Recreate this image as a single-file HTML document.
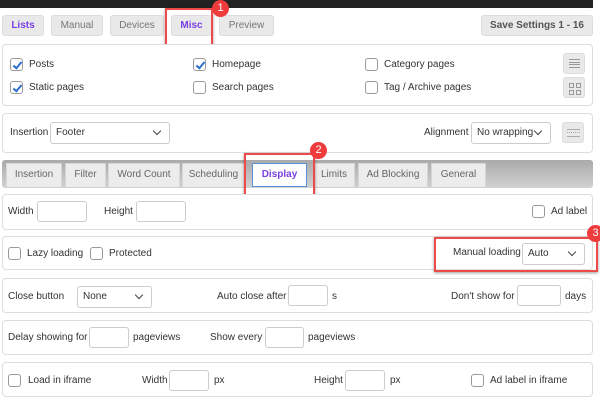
<!DOCTYPE html><html><head><style>
body{margin:0;width:600px;height:404px;background:#fff;font-family:"Liberation Sans",sans-serif;font-size:10px;color:#333;position:relative;overflow:hidden}
div,span{position:absolute;box-sizing:border-box}
.bar{left:0;top:0;width:593px;height:8px;background:#222}
.btn{height:21px;top:15px;background:#e9e9e9;border:1px solid #ddd;border-radius:3px;color:#777;text-align:center;line-height:19px;font-size:10px}
.pan{left:2px;width:591px;border:1px solid #ddd;border-radius:4px;background:#fff}
.cb{width:13px;height:13px;border:1px solid #999;border-radius:3px;background:#fff}
.ck::after{content:"";position:absolute;left:3.5px;top:1px;width:3px;height:7px;border:solid #2a6fc9;border-width:0 2px 2px 0;transform:rotate(40deg)}
.t{white-space:nowrap;line-height:13px}
.in{height:21px;border:1px solid #ccc;border-radius:3px;background:#fff}
.sel{height:22px;border:1px solid #ccc;border-radius:3px;background:#fff;padding-left:5px;line-height:20px;font-size:10px;color:#333}
.sel::after{content:"";position:absolute;right:9px;top:5px;width:5px;height:5px;border:solid #444;border-width:0 1.5px 1.5px 0;transform:rotate(45deg)}
.tab{top:163px;height:24px;background:#ececec;border:1px solid #d6d6d6;border-bottom:none;color:#666;text-align:center;line-height:22px;font-size:10px}
.red{border:2px solid #ef4a4a;box-shadow:0 1px 3px rgba(0,0,0,.4)}
.bd{width:17px;height:17px;border-radius:50%;background:#ee3b3b;color:#fff;font-size:11px;text-align:center;line-height:17px}
.ic{width:22px;height:21px;background:#e9e9e9;border:1px solid #ddd;border-radius:3px}
</style></head><body>
<div class="bar"></div>
<div class="btn" style="left:2px;width:42px;color:#7b3fe4;font-weight:bold">Lists</div>
<div class="btn" style="left:51px;width:52px">Manual</div>
<div class="btn" style="left:110px;width:54px">Devices</div>
<div class="btn" style="left:171px;width:41px;color:#7b3fe4;font-weight:bold">Misc</div>
<div class="btn" style="left:219px;width:55px">Preview</div>
<div class="btn" style="left:481px;width:112px;color:#555;font-weight:bold">Save Settings 1 - 16</div>
<div class="red" style="left:165px;top:8px;width:48px;height:38px"></div>
<div class="bd" style="left:212px;top:0px">1</div>

<div class="pan" style="top:44px;height:62px"></div>
<div class="cb ck" style="left:10px;top:58px"></div><span class="t" style="left:29px;top:58px">Posts</span>
<div class="cb ck" style="left:193px;top:58px"></div><span class="t" style="left:212px;top:58px">Homepage</span>
<div class="cb" style="left:365px;top:58px"></div><span class="t" style="left:384px;top:58px">Category pages</span>
<div class="cb ck" style="left:10px;top:81px"></div><span class="t" style="left:29px;top:81px">Static pages</span>
<div class="cb" style="left:193px;top:81px"></div><span class="t" style="left:212px;top:81px">Search pages</span>
<div class="cb" style="left:365px;top:81px"></div><span class="t" style="left:384px;top:81px">Tag / Archive pages</span>
<div class="ic" style="left:563px;top:53px"><div style="left:5px;top:5px;width:11px;height:9px;border-top:1px solid #999;border-bottom:1px solid #999"></div><div style="left:5px;top:8px;width:11px;height:3px;border-top:1px solid #999;border-bottom:1px solid #999"></div></div>
<div class="ic" style="left:563px;top:77px"><div style="left:5px;top:5px;width:5px;height:5px;border:1px solid #999"></div><div style="left:12px;top:5px;width:5px;height:5px;border:1px solid #999"></div><div style="left:5px;top:12px;width:5px;height:5px;border:1px solid #999"></div><div style="left:12px;top:12px;width:5px;height:5px;border:1px solid #999"></div></div>

<div class="pan" style="top:113px;height:40px"></div>
<span class="t" style="left:10px;top:126px">Insertion</span>
<div class="sel" style="left:50px;top:122px;width:120px">Footer</div>
<span class="t" style="left:424px;top:126px">Alignment</span>
<div class="sel" style="left:471px;top:122px;width:80px">No wrapping</div>
<div class="ic" style="left:562px;top:122px"><div style="left:4px;top:6px;width:13px;height:8px;border:1px solid #aaa;border-width:1px 0"></div><div style="left:4px;top:9px;width:13px;height:2px;border-top:1px dotted #aaa"></div></div>

<div style="left:2px;top:160px;width:591px;height:28px;background:linear-gradient(#a9a9a9,#d2d2d2);border-radius:3px"></div>
<div class="tab" style="left:6px;width:56px">Insertion</div>
<div class="tab" style="left:65px;width:41px">Filter</div>
<div class="tab" style="left:108px;width:72px">Word Count</div>
<div class="tab" style="left:182px;width:63px">Scheduling</div>
<div class="tab" style="left:252px;width:55px;background:#fff;border:1px solid #5b8fd6;color:#7b3fe4;font-weight:bold">Display</div>
<div class="tab" style="left:313px;width:42px">Limits</div>
<div class="tab" style="left:358px;width:70px">Ad Blocking</div>
<div class="tab" style="left:431px;width:55px">General</div>
<div class="red" style="left:244px;top:153px;width:71px;height:43px"></div>
<div class="bd" style="left:310px;top:142px">2</div>

<div class="pan" style="top:194px;height:36px"></div>
<span class="t" style="left:8px;top:205px">Width</span><div class="in" style="left:37px;top:201px;width:50px"></div>
<span class="t" style="left:104px;top:205px">Height</span><div class="in" style="left:136px;top:201px;width:50px"></div>
<div class="cb" style="left:532px;top:205px"></div><span class="t" style="left:551px;top:205px">Ad label</span>

<div class="pan" style="top:236px;height:34px"></div>
<div class="cb" style="left:8px;top:247px"></div><span class="t" style="left:27px;top:247px">Lazy loading</span>
<div class="cb" style="left:90px;top:247px"></div><span class="t" style="left:109px;top:247px">Protected</span>
<span class="t" style="left:453px;top:246px">Manual loading</span>
<div class="sel" style="left:522px;top:243px;width:63px">Auto</div>
<div class="red" style="left:434px;top:237px;width:164px;height:35px"></div>
<div class="bd" style="left:587px;top:225px">3</div>

<div class="pan" style="top:278px;height:35px"></div>
<span class="t" style="left:8px;top:290px">Close button</span>
<div class="sel" style="left:77px;top:286px;width:75px">None</div>
<span class="t" style="left:217px;top:290px">Auto close after</span><div class="in" style="left:288px;top:285px;width:40px"></div><span class="t" style="left:332px;top:290px">s</span>
<span class="t" style="left:451px;top:290px">Don't show for</span><div class="in" style="left:517px;top:285px;width:44px"></div><span class="t" style="left:565px;top:290px">days</span>

<div class="pan" style="top:320px;height:35px"></div>
<span class="t" style="left:8px;top:331px">Delay showing for</span><div class="in" style="left:89px;top:327px;width:40px"></div><span class="t" style="left:133px;top:331px">pageviews</span>
<span class="t" style="left:210px;top:331px">Show every</span><div class="in" style="left:265px;top:327px;width:39px"></div><span class="t" style="left:308px;top:331px">pageviews</span>

<div class="pan" style="top:362px;height:35px"></div>
<div class="cb" style="left:8px;top:374px"></div><span class="t" style="left:28px;top:374px">Load in iframe</span>
<span class="t" style="left:142px;top:374px">Width</span><div class="in" style="left:169px;top:370px;width:40px"></div><span class="t" style="left:214px;top:374px">px</span>
<span class="t" style="left:314px;top:374px">Height</span><div class="in" style="left:345px;top:370px;width:40px"></div><span class="t" style="left:390px;top:374px">px</span>
<div class="cb" style="left:471px;top:374px"></div><span class="t" style="left:490px;top:374px">Ad label in iframe</span>
</body></html>
